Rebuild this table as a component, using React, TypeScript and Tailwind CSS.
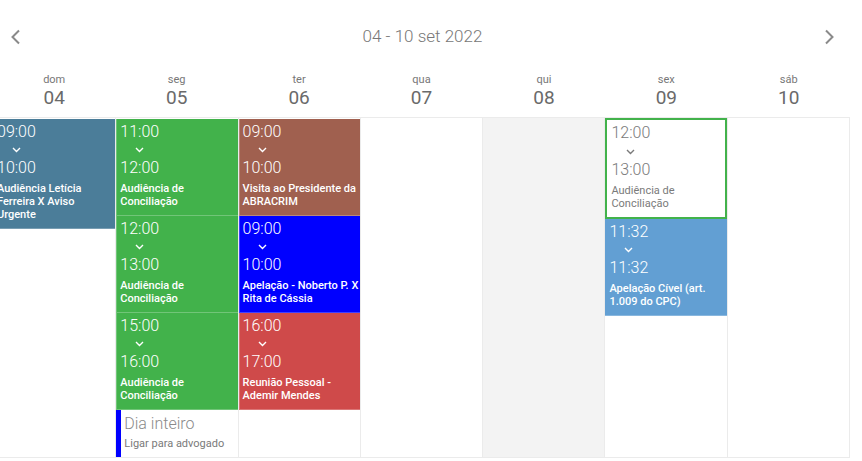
import type { JSX } from 'react';

type Evt = {
  start: string;
  end: string;
  title: string;
  bg: string;
};

const days = [
  { name: 'dom', num: '04' },
  { name: 'seg', num: '05' },
  { name: 'ter', num: '06' },
  { name: 'qua', num: '07' },
  { name: 'qui', num: '08' },
  { name: 'sex', num: '09' },
  { name: 'sáb', num: '10' },
];

function Chevron({ className }: { className: string }): JSX.Element {
  return (
    <svg width="9" height="6" viewBox="0 0 9 6" className={className}>
      <polyline points="1,1 4.5,4.5 8,1" fill="none" stroke="currentColor" strokeWidth="1.4" />
    </svg>
  );
}

function EventCard({ evt }: { evt: Evt }): JSX.Element {
  return (
    <div className={`${evt.bg} border-b border-l border-white/25 pl-[3px] pt-[3px] pb-[7px] text-white`}>
      <div className="text-[16px] font-light leading-[20px]">{evt.start}</div>
      <div className="flex h-[16px] items-center pl-[15px]">
        <Chevron className="text-white" />
      </div>
      <div className="text-[16px] font-light leading-[20px]">{evt.end}</div>
      <div className="mt-[4px] text-[11px] font-medium leading-[13px]">{evt.title}</div>
    </div>
  );
}

export default function App(): JSX.Element {
  return (
    <div className="h-[461px] w-[862px] overflow-hidden bg-white font-['Roboto',sans-serif]">
      {/* Week navigation */}
      <div className="flex h-[72px] items-center justify-between px-[10px] pt-[1px]">
        <svg width="12" height="16" viewBox="0 0 12 16" className="text-[#8a8a8a]">
          <polyline points="9,1.5 2.5,8 9,14.5" fill="none" stroke="currentColor" strokeWidth="2" />
        </svg>
        <div className="text-[17px] font-light text-[#777]">04 - 10 set 2022</div>
        <svg width="12" height="16" viewBox="0 0 12 16" className="mr-[17px] text-[#8a8a8a]">
          <polyline points="3,1.5 9.5,8 3,14.5" fill="none" stroke="currentColor" strokeWidth="2" />
        </svg>
      </div>

      <div className="ml-[-7px] w-[857px]">
        {/* Day header */}
        <div className="grid h-[45px] grid-cols-7 pt-[1px]">
          {days.map((d) => (
            <div key={d.name} className="flex flex-col items-center">
              <div className="text-[11px] leading-[14px] text-[#777]">{d.name}</div>
              <div className="text-[19px] leading-[22px] text-[#6a6a6a]">{d.num}</div>
            </div>
          ))}
        </div>

        {/* Week grid */}
        <div className="grid h-[341px] grid-cols-7 border-t border-b border-r border-[#ebebeb]">
          {/* dom */}
          <div className="flex flex-col">
            <div className="h-[1px]" />
            <EventCard evt={{ start: '09:00', end: '10:00', title: 'Audiência Letícia Ferreira X Aviso Urgente', bg: 'bg-[#4b7d99]' }} />
          </div>

          {/* seg */}
          <div className="flex flex-col border-l border-[#ebebeb]">
            <div className="h-[1px]" />
            <EventCard evt={{ start: '11:00', end: '12:00', title: 'Audiência de Conciliação', bg: 'bg-[#42b24b]' }} />
            <EventCard evt={{ start: '12:00', end: '13:00', title: 'Audiência de Conciliação', bg: 'bg-[#42b24b]' }} />
            <EventCard evt={{ start: '15:00', end: '16:00', title: 'Audiência de Conciliação', bg: 'bg-[#42b24b]' }} />
            <div className="flex-1 border-l-[5px] border-[#0000ff] pl-[3px] pt-[4px]">
              <div className="text-[16px] font-light leading-[20px] text-[#8a8a8a]">Dia inteiro</div>
              <div className="mt-[3px] text-[11px] leading-[13px] text-[#7a7a7a]">Ligar para advogado</div>
            </div>
          </div>

          {/* ter */}
          <div className="flex flex-col border-l border-[#ebebeb]">
            <div className="h-[1px]" />
            <EventCard evt={{ start: '09:00', end: '10:00', title: 'Visita ao Presidente da ABRACRIM', bg: 'bg-[#a0604f]' }} />
            <EventCard evt={{ start: '09:00', end: '10:00', title: 'Apelação - Noberto P. X Rita de Cássia', bg: 'bg-[#0000ff]' }} />
            <EventCard evt={{ start: '16:00', end: '17:00', title: 'Reunião Pessoal - Ademir Mendes', bg: 'bg-[#cf4a4a]' }} />
          </div>

          {/* qua */}
          <div className="border-l border-[#ebebeb]" />

          {/* qui */}
          <div className="border-l border-[#ebebeb] bg-[#f3f3f3]" />

          {/* sex */}
          <div className="flex flex-col border-l border-[#ebebeb]">
            <div className="border-2 border-[#42b24b] bg-white pl-[4px] pt-[3px] pb-[7px] text-[#7a7a7a]">
              <div className="text-[16px] font-light leading-[20px]">12:00</div>
              <div className="flex h-[17px] items-center pl-[15px]">
                <Chevron className="text-[#7a7a7a]" />
              </div>
              <div className="text-[16px] font-light leading-[20px]">13:00</div>
              <div className="mt-[4px] text-[11px] leading-[13px]">Audiência de Conciliação</div>
            </div>
            <div className="border-b border-white/25 bg-[#629fd3] pl-[4px] pt-[3px] pb-[7px] text-white">
              <div className="text-[16px] font-light leading-[20px]">11:32</div>
              <div className="flex h-[16px] items-center pl-[15px]">
                <Chevron className="text-white" />
              </div>
              <div className="text-[16px] font-light leading-[20px]">11:32</div>
              <div className="mt-[4px] text-[11px] font-medium leading-[13px]">Apelação Cível (art. 1.009 do CPC)</div>
            </div>
          </div>

          {/* sáb */}
          <div className="border-l border-[#ebebeb]" />
        </div>
      </div>
    </div>
  );
}
